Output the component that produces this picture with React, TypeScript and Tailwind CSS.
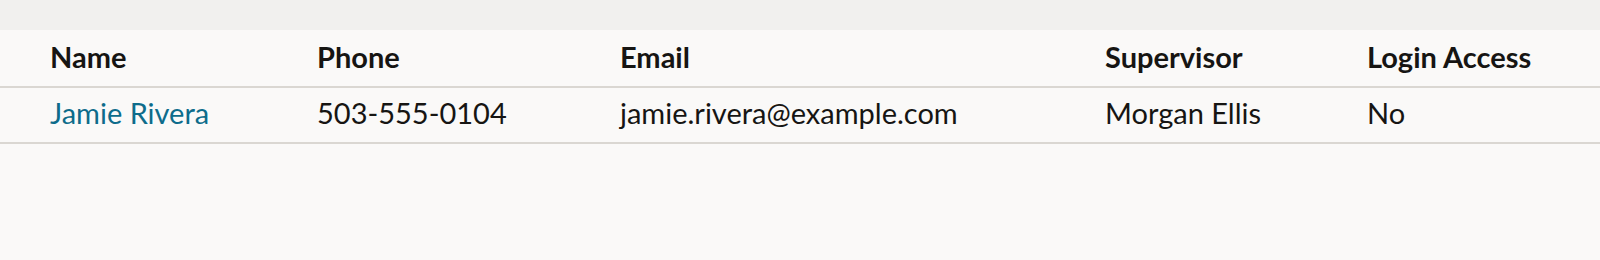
const columns = ['Name', 'Phone', 'Email', 'Supervisor', 'Login Access'];

const rows = [
  {
    name: 'Jamie Rivera',
    phone: '503-555-0104',
    email: 'jamie.rivera@example.com',
    supervisor: 'Morgan Ellis',
    access: 'No',
  },
];

const grid = 'grid grid-cols-[267px_303px_485px_262px_1fr] px-[50px]';

export default function App() {
  return (
    <div className="min-h-[260px] bg-[#faf9f8] font-['Lato',sans-serif] text-[29px] text-[#161513]">
      <div className="h-[30px] bg-[#f1f0ee]" />
      <div className={`${grid} h-[58px] border-b-2 border-[#dad7d2] font-bold leading-[54px]`}>
        {columns.map((c) => (
          <div key={c}>{c}</div>
        ))}
      </div>
      {rows.map((r) => (
        <div key={r.email} className={`${grid} h-[56px] border-b-2 border-[#dad7d2] leading-[50px]`}>
          <a href="#" className="text-[#0d6c8b]">
            {r.name}
          </a>
          <div>{r.phone}</div>
          <div>{r.email}</div>
          <div>{r.supervisor}</div>
          <div>{r.access}</div>
        </div>
      ))}
    </div>
  );
}
